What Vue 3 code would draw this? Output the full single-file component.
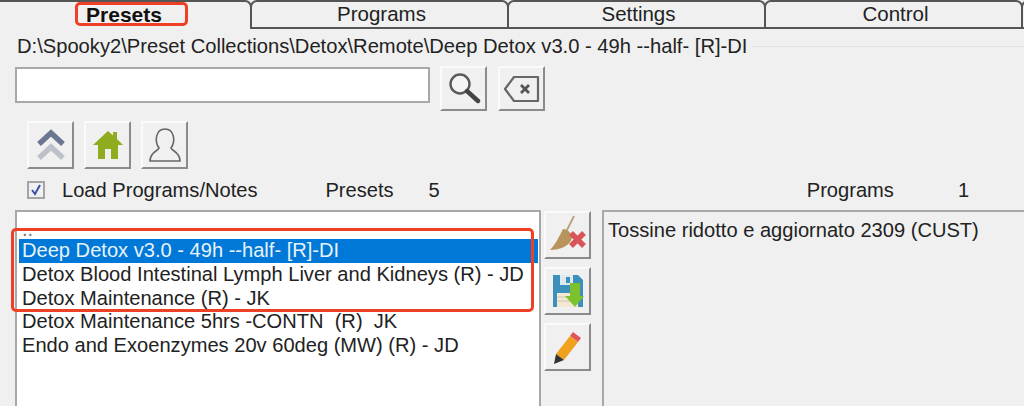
<template>
  <div class="window">
    <div class="tabs">
      <div
        v-for="tab in tabs"
        :key="tab"
        class="tab"
        :class="{ active: tab === 'Presets' }"
      >
        <span>{{ tab }}</span>
      </div>
      <div class="tab tab-rest"></div>
    </div>

    <div class="group">
      <div class="legend">
        <span>D:\Spooky2\Preset Collections\Detox\Remote\Deep Detox v3.0 - 49h --half- [R]-DI</span>
      </div>

      <div class="search-row">
        <div class="search-box"></div>
        <button class="tool wide">
          <svg width="34" height="34" viewBox="0 0 34 34">
            <circle cx="13" cy="12" r="9.500" fill="#f4f4f4" stroke="#5a5a5a" stroke-width="2.400" />
            <path d="M20 19 L31 29" stroke="#444" stroke-width="4.400" stroke-linecap="round" />
          </svg>
        </button>
        <button class="tool wide">
          <svg width="38" height="30" viewBox="0 0 38 30">
            <path d="M11 3 H35 V27 H11 L2 15 Z" fill="none" stroke="#666" stroke-width="2.200" stroke-linejoin="round" />
            <path d="M18 11 L26 19 M26 11 L18 19" stroke="#555" stroke-width="2.800" />
          </svg>
        </button>
      </div>

      <div class="nav-row">
        <button class="tool nav">
          <svg width="30" height="34" viewBox="0 0 30 34">
            <path d="M3 16 L15 5 L27 16" fill="none" stroke="#6b7790" stroke-width="5.400" />
            <path d="M3 30 L15 19 L27 30" fill="none" stroke="#bcc0c8" stroke-width="5.400" />
          </svg>
        </button>
        <button class="tool nav">
          <svg width="32" height="32" viewBox="0 0 32 32">
            <path d="M1 16 L16 2 L21 6.500 V3 H25 V10 L31 16 H26 V30 H19 V20 H13 V30 H6 V16 Z" fill="#8fac1e" />
          </svg>
        </button>
        <button class="tool nav">
          <svg width="34" height="38" viewBox="0 0 34 38">
            <path d="M11 22 C6 15 8 3 17 3 C26 3 28 15 23 22 C24 25 32 26 32 35 H2 C2 26 10 25 11 22 Z" fill="none" stroke="#666" stroke-width="1.600" />
          </svg>
        </button>
      </div>

      <div class="info-row">
        <div class="check">
          <svg width="12" height="12" viewBox="0 0 12 12">
            <path d="M2 6 L5 10 L10 1" fill="none" stroke="#3c4f9e" stroke-width="2" />
          </svg>
        </div>
        <span class="load">Load Programs/Notes</span>
        <span class="presets-label">Presets</span>
        <span class="presets-count">5</span>
        <span class="programs-label">Programs</span>
        <span class="programs-count">1</span>
      </div>

      <div class="lists">
        <div class="list">
          <div class="list-item dots">..</div>
          <div
            v-for="(item, i) in presets"
            :key="item"
            class="list-item"
          >
            <span :class="{ selected: i === 0 }">{{ item }}</span>
          </div>
        </div>

        <div class="side">
          <button class="tool side-btn">
            <svg width="38" height="40" viewBox="0 0 38 40">
              <path d="M25 1 L17 17" stroke="#b9a07a" stroke-width="1.800" />
              <path d="M14 14 C19 14 23 19 23 23 C21 31 11 35 1 35 C6 30 10 22 14 14 Z" fill="#b8935c" />
              <path d="M22 18 L35 31 M35 18 L22 31" stroke="#d9545a" stroke-width="5.400" />
            </svg>
          </button>
          <button class="tool side-btn">
            <svg width="32" height="34" viewBox="0 0 32 34">
              <path d="M1 1 H26 L31 6 V33 H1 Z" fill="#3d8fbc" />
              <rect x="8" y="1" width="13" height="10" fill="#dfeaf0" />
              <rect x="14" y="3" width="4" height="6" fill="#3d8fbc" />
              <rect x="5" y="19" width="21" height="14" fill="#f3e8d2" />
              <path d="M5 23 H26 M5 27 H26" stroke="#cfc7b5" stroke-width="1" />
              <path d="M18 9 H28 V22 H32 L23 33 L13 22 H18 Z" fill="#7cc22e" />
            </svg>
          </button>
          <button class="tool side-btn">
            <svg width="30" height="36" viewBox="0 0 30 36">
              <path d="M20 3 L28 9 L25 13 L17 7 Z" fill="#e0555a" />
              <path d="M17 7 L25 13 L11 31 L3 25 Z" fill="#f0a21e" />
              <path d="M3 25 L11 31 L1 35 Z" fill="#333" />
            </svg>
          </button>
        </div>

        <div class="notes">Tossine ridotto e aggiornato 2309 (CUST)</div>
      </div>
    </div>

    <div class="mark mark-tab"></div>
    <div class="mark mark-list"></div>
  </div>
</template>

<script setup>
const tabs = ["Presets", "Programs", "Settings", "Control"];

const presets = [
  "Deep Detox v3.0 - 49h --half- [R]-DI",
  "Detox Blood Intestinal Lymph Liver and Kidneys (R) - JD",
  "Detox Maintenance (R) - JK",
  "Detox Maintenance 5hrs -CONTN  (R)  JK",
  "Endo and Exoenzymes 20v 60deg (MW) (R) - JD",
];
</script>

<style scoped>
.window {
  position: relative;
  width: 1024px;
  height: 406px;
  overflow: hidden;
  background: #f0f0f0;
  color: #222;
  font-family: "Liberation Sans", Arial, sans-serif;
  font-size: 20.100px;
}

.tabs {
  display: flex;
  height: 29px;
  box-sizing: border-box;
}

.tab {
  flex: 0 0 259px;
  margin-right: -2px;
  display: flex;
  justify-content: center;
  align-items: center;
  box-sizing: border-box;
  padding: 0 0 1px 4px;
  border: 2px solid #555;
  border-top-left-radius: 7px;
  border-top-right-radius: 7px;
  font-size: 20.500px;
  white-space: pre;
}

.tab.active {
  flex-basis: 252px;
  padding-left: 0;
  border-left: none;
  border-bottom: none;
  border-top-left-radius: 0;
  font-weight: bold;
  color: #111;
  font-size: 21px;
}

.tab.active span {
  margin-right: 2px;
}

.tab-rest {
  flex: 1 0 10px;
  margin-right: 0;
  border-right: none;
  border-top-right-radius: 0;
}

.group {
  padding-left: 15px;
}

.legend {
  height: 33px;
  display: flex;
  align-items: center;
  padding: 1px 0 0 2px;
  box-sizing: border-box;
  font-size: 20.160px;
  white-space: nowrap;
}

.legend::after {
  content: "";
  flex: 1;
  height: 1px;
  margin-left: 6px;
  background: #dde3e8;
}

.search-row {
  display: flex;
  align-items: flex-start;
  height: 51px;
  margin-top: 4px;
}

.search-box {
  width: 415px;
  height: 36px;
  margin-top: 1px;
  box-sizing: border-box;
  background: #fff;
  border: 2px solid #a8a8ac;
}

.tool {
  display: flex;
  justify-content: center;
  align-items: center;
  padding: 0;
  box-sizing: border-box;
  background: #f0f0f0;
  border: 2px solid;
  border-color: #fafafa #8b8b8b #8b8b8b #fafafa;
}

.wide {
  width: 47px;
  height: 45px;
  margin-left: 10px;
}

.wide + .wide {
  margin-left: 11px;
}

.nav-row {
  display: flex;
  gap: 10px;
  height: 58px;
  margin-top: 4px;
  padding-left: 12px;
}

.nav {
  width: 47px;
  height: 48px;
}

.info-row {
  display: flex;
  align-items: center;
  height: 22px;
  padding-left: 12px;
  white-space: nowrap;
}

.check {
  display: flex;
  justify-content: center;
  align-items: center;
  width: 18px;
  height: 18px;
  box-sizing: border-box;
  background: #eef0f4;
  border: 2px solid #a5a5a5;
}

.load {
  margin-left: 17px;
}

.presets-label {
  margin-left: 68px;
}

.presets-count {
  margin-left: 35px;
}

.programs-label {
  margin-left: 367px;
}

.programs-count {
  margin-left: 64px;
}

.lists {
  display: flex;
  margin-top: 9px;
  height: 200px;
}

.list {
  flex: 0 0 526px;
  box-sizing: border-box;
  padding: 7px 0 0 5px;
  background: #fff;
  border: 2px solid #a8a8ac;
  border-bottom: none;
}

.list-item {
  height: 23.800px;
  line-height: 23.800px;
  white-space: pre;
}

.dots {
  height: 20px;
  line-height: 20px;
  color: #777;
}

.selected {
  display: block;
  width: 516px;
  background: #0078d7;
  color: #e8f2fb;
  padding-left: 3px;
  margin-left: -3px;
}

.side {
  flex: 0 0 61px;
  display: flex;
  flex-direction: column;
  gap: 8px;
  padding: 1px 0 0 3px;
  box-sizing: border-box;
}

.side-btn {
  width: 47px;
  height: 48px;
}

.notes {
  flex: 1;
  padding: 7px 0 0 4px;
  border: 2px solid #a8a8ac;
  border-width: 2px 0 0 2px;
  white-space: nowrap;
}

.mark {
  position: absolute;
  border: 3px solid #ee4027;
  border-radius: 5px;
  box-sizing: border-box;
  pointer-events: none;
}

.mark-tab {
  left: 75px;
  top: 2px;
  width: 113px;
  height: 24px;
}

.mark-list {
  left: 11px;
  top: 228px;
  width: 523px;
  height: 84px;
}
</style>
